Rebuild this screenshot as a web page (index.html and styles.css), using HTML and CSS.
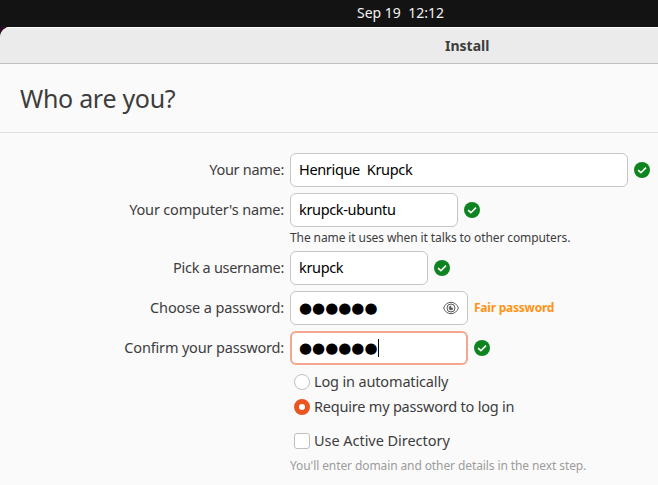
FILE: index.html
```html
<!DOCTYPE html>
<html lang="en">
<head>
<meta charset="utf-8">
<title>Install</title>
<link rel="stylesheet" href="styles.css">
</head>
<body>
<svg class="defs" width="0" height="0" aria-hidden="true">
  <symbol id="ok" viewBox="0 0 16 16"><circle cx="8" cy="8" r="8" fill="#0e8420"/><path d="M4.1 8.1 6.9 10.700 12 5.600" fill="none" stroke="#fff" stroke-width="1.6"/></symbol>
</svg>
<div class="topbar"><span class="t-clock">Sep 19&nbsp; 12:12</span></div>
<div class="desktop">
<main class="window">
  <header class="titlebar"><span class="t-title">Install</span></header>
  <div class="heading"><h1>Who are you?</h1></div>
  <form class="form">
    <div class="row">
      <label class="t-name">Your name:</label>
      <div class="field w-name"><span class="t-henrique">Henrique&nbsp; Krupck</span></div>
      <svg class="ok"><use href="#ok"/></svg>
    </div>
    <div class="row">
      <label class="t-computer">Your computer's name:</label>
      <div class="field w-host"><span class="t-host">krupck-ubuntu</span></div>
      <svg class="ok"><use href="#ok"/></svg>
    </div>
    <p class="hint"><span class="t-hint">The name it uses when it talks to other computers.</span></p>
    <div class="row">
      <label class="t-pick">Pick a username:</label>
      <div class="field w-user"><span class="t-user">krupck</span></div>
      <svg class="ok"><use href="#ok"/></svg>
    </div>
    <div class="row">
      <label class="t-choose">Choose a password:</label>
      <div class="field w-pass"><span class="dots">●●●●●●</span>
        <svg class="eye" viewBox="0 0 16 14" fill="none" stroke="#5a5a5a"><path d="M.6 7C2 3.200 4.800 1.300 8 1.300S14 3.200 15.400 7C14 10.800 11.200 12.700 8 12.700S2 10.800.6 7Z"/><circle cx="8" cy="7" r="4"/><path d="M8 5a2 2 0 1 0 2 2H8Z" fill="#5a5a5a" stroke-width=".5"/></svg>
      </div>
      <span class="strength">Fair password</span>
    </div>
    <div class="row">
      <label class="t-confirm">Confirm your password:</label>
      <div class="field w-pass focused"><span class="dots">●●●●●●</span><i class="caret"></i></div>
      <svg class="ok"><use href="#ok"/></svg>
    </div>
    <div class="choice"><i class="radio"></i><span class="t-auto">Log in automatically</span></div>
    <div class="choice"><i class="radio on"></i><span class="t-require">Require my password to log in</span></div>
    <div class="choice directory"><i class="check"></i><span class="t-directory">Use Active Directory</span></div>
    <p class="note"><span class="t-note">You'll enter domain and other details in the next step.</span></p>
  </form>
</main>
</div>
</body>
</html>
```

FILE: styles.css
```css
* { box-sizing: border-box; }
body { margin: 0; width: 658px; height: 485px; overflow: hidden; background: #131313; color: #3d3d3d; font: 14.5px/20px "Noto Sans", "Open Sans", sans-serif; white-space: nowrap; }
.defs { display: block; width: 0; height: 0; }
.topbar { height: 27px; background: #131313; color: #f2f2f2; padding-left: 357px; line-height: 26px; font-size: 14px; }
.desktop { background: #300a24; }
.window { height: 458px; background: #fafafa; border-top-left-radius: 10px; overflow: hidden; }
.titlebar { height: 37px; background: #ebebeb; border-top: 1px solid #fff; border-bottom: 1px solid #bfbfbf; padding-left: 445px; line-height: 36px; font-weight: 700; font-size: 14px; }
.heading { height: 69px; border-bottom: 1px solid #dedede; padding-left: 20px; }
h1 { margin: 0; font-size: 25px; line-height: 69px; font-weight: 400; letter-spacing: -.3px; }
.form { padding-top: 20px; }
.row { display: flex; align-items: center; height: 34px; margin-bottom: 6px; }
.row label { width: 284px; margin-right: 6px; display: flex; justify-content: flex-end; flex: none; padding-bottom: 2px; }
.field { height: 34px; border: 1px solid #c6c6c6; border-radius: 6px; background: #fff; color: #000; padding-left: 8px; display: flex; align-items: center; margin-right: 6px; flex: none; }
.w-name { width: 338px; }
.w-host { width: 168px; }
.w-user { width: 138px; }
.w-pass { width: 178px; }
.t-name, .t-pick { letter-spacing: -.3px; }
.t-computer, .t-confirm { letter-spacing: -.17px; }
.t-choose { letter-spacing: -.12px; }
.t-henrique, .t-host, .t-user { padding-bottom: 2px; letter-spacing: -.34px; }
.t-hint, .t-note { letter-spacing: -.1px; }
.t-auto { letter-spacing: -.15px; }
.t-require { letter-spacing: -.21px; }
.t-directory { letter-spacing: -.04px; }
.focused { border: 2px solid #f4a78e; padding-left: 7px; }
.ok { width: 16px; height: 16px; flex: none; }
.hint { margin: -6px 0 0; padding-left: 290px; height: 24px; line-height: 22px; font-size: 12px; }
.dots { font: 15px/20px "DejaVu Sans", sans-serif; }
.caret { width: 1px; height: 18px; background: #000; }
.eye { width: 16px; height: 14px; margin-left: auto; margin-right: 8px; }
.strength { color: #ff9416; font-weight: 700; font-size: 12px; letter-spacing: -.23px; }
.choice { display: flex; align-items: center; height: 25px; padding-left: 294px; }
.choice span { padding-bottom: 2px; }
.row + .choice { margin-top: -2px; }
.radio, .check { width: 16px; height: 16px; border: 1px solid #bfbfbf; background: #fff; margin-right: 4px; flex: none; }
.radio { border-radius: 50%; }
.radio.on { border: 5px solid #e95420; }
.check { border-radius: 3px; }
.directory { margin-top: 9px; }
.note { margin: 0; padding-left: 290px; line-height: 26px; font-size: 12px; color: #9c9c9c; }
```
